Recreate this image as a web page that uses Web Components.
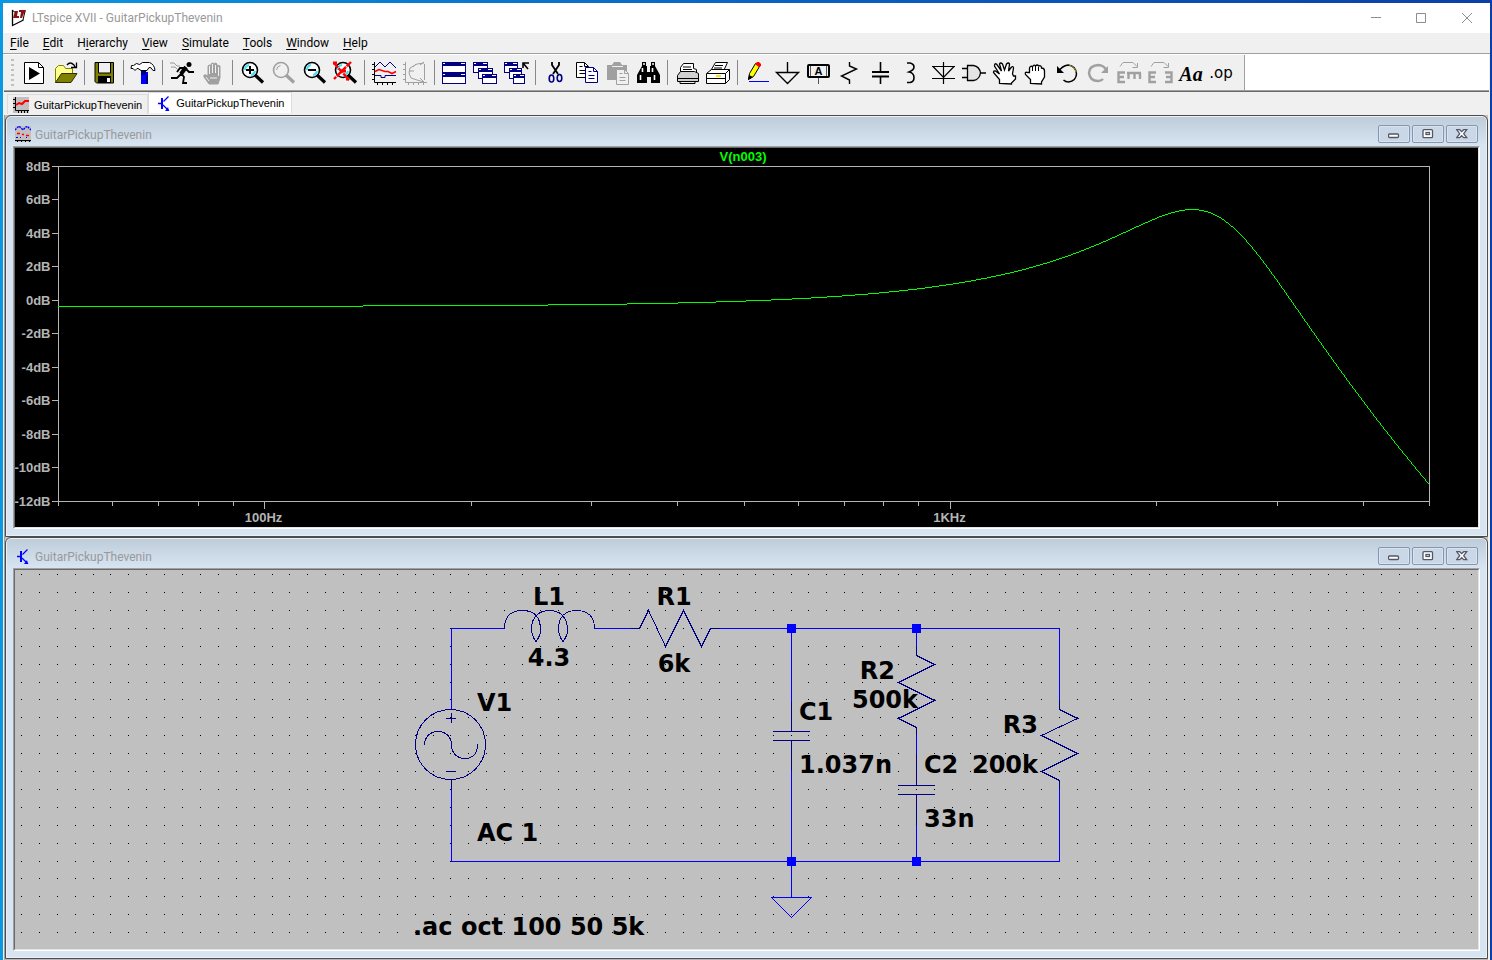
<!DOCTYPE html>
<html lang="en">
<head>
<meta charset="utf-8">
<title>LTspice XVII - GuitarPickupThevenin</title>
<style>
  html, body { height: 100%; }
  body {
    margin: 0; box-sizing: border-box; padding: 3px 2px 0 3px; overflow: hidden;
    background: linear-gradient(to right, #0a98e3, #0a63c4 50%, #0a3fa8);
    font: 12px/16px Roboto, "Noto Sans", sans-serif; color: #000;
  }
</style>
</head>
<body>
<app-window>
  <title-bar slot="bars">LTspice XVII - GuitarPickupThevenin</title-bar>
  <menu-bar slot="bars"></menu-bar>
  <tool-bar slot="bars"></tool-bar>
  <tab-strip slot="bars"></tab-strip>
  <mdi-window icon="plot" heading="GuitarPickupThevenin"><bode-plot></bode-plot></mdi-window>
  <mdi-window icon="sch" heading="GuitarPickupThevenin"><schematic-sheet></schematic-sheet></mdi-window>
</app-window>

<script>
const BUTTON_RESET = `button{all:unset;box-sizing:border-box;cursor:default} svg{display:block}`;

const axes = c => `<path d="M5.5 1V21.5H27M3 3.5h3M3 8.5h3M3 13.5h3M3 18.5h3M8.5 21v3M13.5 21v3M18.5 21v3M23.5 21v3" stroke="${c}" fill="none"/>`;
const lens = (x, c, glass) => `<circle cx="${x}" cy="9" r="7.5" fill="${glass}" stroke="${c}" stroke-width="1.6"/><path d="M${x + 5} 14l8 7.5" stroke="${c}" stroke-width="3.2"/>`;
const glint = x => `<path d="M${x - 5} 9a5 5 0 0 1 4-5M${x + 5} 10a5 5 0 0 1-4 4" stroke="#40e0f0" stroke-width="2" fill="none"/>`;
const win = (x, y, w, h) => `<rect x="${x + .5}" y="${y + .5}" width="${w - 1}" height="${h - 1}" fill="#fff" stroke="#000080"/><path d="M${x} ${y + 2}h${w}" stroke="#000080" stroke-width="4"/><path d="M${x + w - 5} ${y + 1.5}h4M${x + 1} ${y + 1.5}h2" stroke="#fff"/>`;
const sheet = (x, y, f, c) => `<path d="M${x} ${y}h8l4 4v11h-12z" fill="${f}" stroke="${c}"/><path d="M${x + 8} ${y}v4h4M${x + 3} ${y + 4}h3M${x + 3} ${y + 8}h6M${x + 3} ${y + 11}h6" fill="none" stroke="${c}"/>`;
const bend = `<path d="M6 5.5l3-4h10l4 4M18.5 6.5h5V2" fill="none" stroke="#a0a0a0"/>`;

const ICONS = {
  run: `<path d="M5.5 1.5h14l5 5v16h-19z" fill="#fff" stroke="#000"/><path d="M19.5 1.5v5h5" fill="none" stroke="#000"/><path d="M10 6v13l11-6.5z"/>`,
  open: `<path d="M5.5 21.5V7.5l3-3h5l2 3h7v5" fill="#ffff90" stroke="#808000"/><path d="M5.5 21.5l6-9h15.5l-6 9z" fill="#808000" stroke="#303000"/><path d="M17 4q3-4 7 0l1 2M21 6.5h5.5V1.5" fill="none" stroke="#000" stroke-width="1.3"/>`,
  save: `<path d="M6 1.5h18.5v20.5h-17l-1.5-1.5z" fill="#808000" stroke="#000"/><path d="M9.5 2v10h12V2" fill="#f0f0f0" stroke="#000"/><path d="M9 15h13v7H9z"/><path d="M18 17h3v4h-3z" fill="#fff"/>`,
  hammer: `<path d="M13 11h7v12h-7z" fill="#00f"/><path d="M13 9h5v5h-5z" fill="#000080"/><path d="M18 14h2v9h-2z" fill="#000080"/><path d="M3.5 4.5h2l3-2 3 1 3-2h7q5 2 5.5 8h-2q-2-4-4-3l-2 3h-6l-3-2h-1l-2 2-2-2h-2z" fill="#fff" stroke="#000"/>`,
  runner: `<circle cx="22" cy="3.5" r="2.5"/><path d="M19 7l-5 5 3 4-1 6h4M14 13l-4 4H4M19 8l3 3h5M18 7l-5 0-3 4" fill="none" stroke="#000" stroke-width="1.8"/><path d="M19 6l-5 7" stroke="#000" stroke-width="4"/><path d="M3 2h4l3 3h3M4 6h4l2 2" fill="none" stroke="#999"/>`,
  stop: `<path d="M10 15V5q1.5-2 3 0V3q1.5-2 3 0V3q2-2 3 0v2q2-1 3 0v12l-2 6H11l-5-7q-1-3 2-2z" fill="#a0a0a0" stroke="#a0a0a0"/><path d="M11.5 5v8M14.5 3v9M17.5 4v8M20.5 6v9M8 16l3 4M12 17h7" stroke="#f0f0f0" fill="none"/>`,
  zin: lens(13, '#000', '#fff') + glint(13) + `<path d="M9 9h8M13 5v8" stroke="#000" stroke-width="2"/>`,
  zpan: lens(13, '#a0a0a0', '#f0f0f0') + `<path d="M8.5 9a5 5 0 0 1 4-4.5" stroke="#a0a0a0" fill="none"/>`,
  zout: lens(13, '#000', '#fff') + glint(13) + `<path d="M9 9h8" stroke="#000" stroke-width="2"/>`,
  zfit: lens(13, '#000', '#fff') + glint(13) + `<path d="M4 2l15 17M21 1L4 18" stroke="#f00" stroke-width="2.4" stroke-dasharray="6 1"/><path d="M3 2h4M16 18h3M10 10h6" stroke="#f00" stroke-width="3"/>`,
  traces: axes('#000') + `<path d="M6 6l5-5 5 5 5-5 6 6M6 14.5h6v2h4v-2h11" stroke="#000080" fill="none"/><path d="M6 10.5l4-2 6 2h3l4 2 4-2" stroke="#f00" stroke-width="1.6" fill="none"/>`,
  smith: axes('#a0a0a0') + `<path d="M24 2l-7 1-7 4-1 5 2 5 6 2 7 2M9 10h5M13 6l3-3M24.5 3v16M20 4l4-3M20 17l4 4" fill="none" stroke="#a0a0a0"/>`,
  tile: win(3, 1, 24, 11) + win(3, 12, 24, 11),
  cascade: win(3, 1, 15, 11) + win(8, 7, 15, 11) + win(12, 13, 15, 10),
  closeall: win(3, 1, 14, 11) + win(8, 7, 13, 11) + win(12, 13, 12, 10) + `<path d="M22 7V2h6M22 2l5 6" stroke="#000" stroke-width="1.6" fill="none"/>`,
  cut: `<path d="M12 1v3l6 9M19 1v3l-6 9" stroke="#000" stroke-width="1.8" fill="none"/><ellipse cx="11.5" cy="17.5" rx="2.3" ry="3.5" fill="none" stroke="#000080" stroke-width="1.6"/><ellipse cx="19.5" cy="17" rx="2.3" ry="3.5" fill="none" stroke="#000080" stroke-width="1.6"/>`,
  copy: sheet(5.5, 1.5, '#fff', '#000') + sheet(14.5, 6.5, '#fff', '#000080'),
  paste: `<path d="M5 4h5l2-3h6l2 3h5v15H5z" fill="#a0a0a0"/><path d="M10 5.5h11" stroke="#f0f0f0"/>` + sheet(14.5, 8.5, '#f0f0f0', '#a0a0a0'),
  find: `<path d="M9 1h4v4h1v6h3V5h1V1h4v4l5 9v8h-9v-6h-4v6H4v-8l5-9z"/><path d="M10 3h2M19 3h2M9.5 7v4M19.5 7v4M7.5 14v5M21.5 14v5" stroke="#fff" stroke-width="1.6"/>`,
  print: `<path d="M8.5 12V6.500l3-4h10v5l3 1v4" fill="#fff" stroke="#000"/><path d="M5.5 14.5l3-4h14l4 2v8h-21z" fill="#d0d0d0" stroke="#000"/><path d="M8 20v2.5h15V20M6 17.5h20M11 6h8M11 8.5h9" fill="none" stroke="#000"/>`,
  psetup: `<path d="M7.5 10l5-8.5h12l-4 8.5z" fill="#fff" stroke="#000"/><path d="M3.5 12.5l5-4h18v10l-4 4h-19z" fill="#fff" stroke="#000"/><path d="M4 12.5h18.5v10M22.5 12.5l4-4M4 17.5h18M12 4.5h8M11 7h8" fill="none" stroke="#000"/><path d="M13 15h5" stroke="#ffe000" stroke-width="2"/>`,
  pencil: `<path d="M6.5 18.5l1-6 6-10 4 3-6 10z" fill="#ff0" stroke="#000"/><path d="M13 3l2-2h2l2 2v2l-2 1z" fill="#f00"/><path d="M6 19l1-5 4 2z"/><path d="M7 20.5h20" stroke="#00f"/>`,
  ground: `<path d="M14.5 1v10M3.5 11.5h22l-11 11z" fill="none" stroke="#000" stroke-width="1.4"/>`,
  label: `<rect x="4" y="4" width="21" height="12" rx="1" fill="#f0f0f0" stroke="#000" stroke-width="2"/><path d="M14.5 17v6M6.5 5v10M22.5 5v10" stroke="#555"/><text x="14.5" y="14" text-anchor="middle" font-family="Liberation Sans" font-weight="700" font-size="11">A</text>`,
  res: `<path d="M14.5 1v4l7 3-15 7 8 4v4" fill="none" stroke="#000" stroke-width="1.4"/>`,
  cap: `<path d="M14.5 1v9M14.5 16v7" stroke="#000" stroke-width="1.6"/><path d="M6 11h17M6 15.5h17" stroke="#000" stroke-width="2"/>`,
  ind: `<path d="M10 2h3q4 1 4 4t-5 5q5 1 5 5.500t-4 5h-3" fill="none" stroke="#000" stroke-width="1.6"/>`,
  diode: `<path d="M15.5 1v22M4 5.5h23M5 5.5l10.500 11 10.500-11M4 17.5h23" fill="none" stroke="#000" stroke-width="1.2"/>`,
  gate: `<path d="M8.5 4.5h6q6 1 7 7.5-1 6.500-7 7.500h-6z" fill="#e4e4e4" stroke="#000" stroke-width="1.3"/><path d="M3 7.5h5M3 16.5h5M21 12h6" stroke="#000" stroke-width="1.4"/>`,
  move: `<path d="M9.5 22.5v-4l-6-7q0-2 2-1.500l4 3-5-8q0-3 2-2l5 7-2-7q1-2 3 0l2 6 2-6q2-2 3 0l-1 7 3-4q2-1 2 1l-1 6 1 2h2v3l-4 4v1z" fill="#fff" stroke="#000" stroke-width="1.3"/>`,
  drag: `<path d="M9.5 22.5v-4l-5-5q-1-3 2-2h2V7q1-3 3-1 1-3 3-1 2-2 3 0 3-1 3 2 3 0 3 3v6l-3 5v2z" fill="#fff" stroke="#000" stroke-width="1.3"/><path d="M11.5 6v4M14.5 5v5M17.5 6v4" stroke="#000"/>`,
  undo: `<path d="M7 10q3-5 9-6 8 1 8.500 9-.5 7-8 8-3 0-5-2" fill="none" stroke="#000" stroke-width="1.5"/><path d="M5 5v7h7z"/><path d="M17 4q6 2 7 7" fill="none" stroke="#a09020"/>`,
  redo: `<path d="M24 10q-3-6-9-6-9 1-9 8 1 8 9 8 3 0 5-2" fill="none" stroke="#a0a0a0" stroke-width="2.4"/><path d="M25 5v7h-7z" fill="#a0a0a0"/>`,
  rotate: bend + `<path d="M11 11.5H4.500v9.500H11M4 16h6M13 12h14M14.500 12v6M20.500 12v6M26 12v6" fill="none" stroke="#a0a0a0" stroke-width="2.4"/>`,
  mirror: bend + `<path d="M11 11.5H4.500v9.500H11M4 16h6M20 11.5h6.500v9.500H20M21 16h6" fill="none" stroke="#a0a0a0" stroke-width="2.4"/>`,
  text: `<text x="15" y="20" text-anchor="middle" font-family="Liberation Serif" font-weight="700" font-style="italic" font-size="20">Aa</text>`,
  op: `<text x="14" y="17" text-anchor="middle" font-family="DejaVu Sans" font-size="15">.op</text>`
};

const SMALL = {
  tabplot: `<path d="M0 0h16v16H0z" fill="#c0c0c0"/><path d="M2.5 0v13.5H16M0 2.5h3M0 6.5h3M0 10.5h3M5.5 13v3M8.5 13v3M11.5 13v3M14.5 13v3" stroke="#000" fill="none"/><path d="M3 8l3-2 3 1 3-3h4" stroke="#f00" stroke-width="2" fill="none"/>`,
  plot: `<path d="M0 0h16v16H0z" fill="#c0c0c0"/><path d="M0 4l4-4 4 4 4-4 4 4" stroke="#00f" stroke-width="1.4" stroke-dasharray="2 1" fill="none"/><path d="M2 7.5h3M7 8.5h2M11 9.5h3" stroke="#f00" stroke-width="1.5"/><path d="M1 11.5h2M5 11.5h1M11 11.5h1" stroke="#00f"/><path d="M0 14.5h16M2.5 14v2M6.5 14v2M10.5 14v2M14.5 14v2" stroke="#000"/>`,
  sch: `<path d="M2 8.5h4M12.5 1.5l-5 5M7 10l6 6" stroke="#00f" stroke-width="1.3" fill="none"/><path d="M6 3v11" stroke="#00f" stroke-width="2"/><path d="M13 16H9l3-4z" fill="#00f"/>`
};

const define = (name, html, setup) => customElements.define(name, class extends HTMLElement {
  connectedCallback() {
    if (this.shadowRoot) return;
    const t = document.createElement('template');
    t.innerHTML = typeof html === 'function' ? html(this) : html;
    this.attachShadow({ mode: 'open' }).append(t.content.cloneNode(true));
    if (setup) setup(this, this.shadowRoot);
  }
});

define('app-window', `
<style>
  :host{display:flex;flex-direction:column;height:100%;background:#f0f0f0}
  .mdi{flex:1;min-height:0;display:flex;flex-direction:column;background:#c8c0b4;margin:0 2px 0 1px;border-left:1px solid #a0a0a0;border-bottom:1px solid #b8b8b8}
</style>
<slot name="bars"></slot><div class="mdi"><slot></slot></div>`);

define('title-bar', `
<style>${BUTTON_RESET}
  :host{display:flex;align-items:center;height:30px;background:#fff;color:#999}
  .logo{margin:0 6px 0 8px}
  .name{flex:1;white-space:nowrap}
  button{width:46px;height:30px;display:grid;place-items:center}
  button svg{stroke:#8c8c8c;fill:none}
</style>
<svg class="logo" width="15" height="18"><path d="M1.5 1v15.500L12.5 11" fill="none" stroke="#000" stroke-width="1.3"/><path d="M1 1l4 3M12 11l2-9" stroke="#000" fill="none"/><path d="M4 2h3L6 7h2v2H2zM8 1h7l-1 3h-1l-2 5H9l1-6H8z" fill="#8b1010"/></svg>
<span class="name"><slot></slot></span>
<button aria-label="Minimize"><svg width="11" height="11"><path d="M1 4.5h10"/></svg></button>
<button aria-label="Maximize"><svg width="11" height="11"><path d="M.5.5h9v9h-9z"/></svg></button>
<button aria-label="Close"><svg width="11" height="11"><path d="M0 0l10 10M10 0L0 10"/></svg></button>`);

define('menu-bar', `
<style>${BUTTON_RESET}
  :host{display:block;border-bottom:1px solid #a0a0a0}
  nav{display:flex;height:20px}
  button{padding:2px 7px}
  u{text-underline-offset:2px}
</style>
<nav>${['<u>F</u>ile', '<u>E</u>dit', 'H<u>i</u>erarchy', '<u>V</u>iew', '<u>S</u>imulate', '<u>T</u>ools', '<u>W</u>indow', '<u>H</u>elp'].map(m => `<button>${m}</button>`).join('')}</nav>`);

define('tool-button', el => `
<style>${BUTTON_RESET}:host{display:block} button{display:block;width:31px;height:24px}</style>
<button aria-label="${el.getAttribute('icon')}"><svg width="31" height="24">${ICONS[el.getAttribute('icon')]}</svg></button>`);

define('tool-bar', `
<style>
  :host{display:flex;background:#fff;border-bottom:1px solid #a0a0a0;margin:0 1px 1px;box-shadow:0 1px #696969}
  .band{display:flex;align-items:center;height:35px;margin-top:1px;background:#f0f0f0;border-right:1px solid #a0a0a0;padding-right:6px}
  .grip{width:3px;height:27px;margin:0 5px 0 7px;background:repeating-linear-gradient(#c0c0c0 0 2px,transparent 2px 5px)}
  hr{width:1px;height:25px;border:0;margin:0 4px 0 3px;background:#888}
</style>
<div class="band"><span class="grip"></span>${'run open | save | hammer | runner stop | zin zpan zout zfit | traces smith | tile cascade closeall | cut copy paste find | print psetup | pencil ground label res cap ind diode gate move drag undo redo rotate mirror text op'
  .split(' ').map(n => n === '|' ? '<hr>' : `<tool-button icon="${n}"></tool-button>`).join('')}</div>`);

define('tab-strip', `
<style>${BUTTON_RESET}
  :host{display:flex;align-items:flex-end;height:23px;box-sizing:border-box;padding:1px 3px;margin-left:1px;font:11px/16px "Liberation Sans",sans-serif}
  button{display:flex;align-items:center;height:20px;border:1px solid #dcdcdc;border-bottom:0;padding:0 5px;gap:5px}
  button[aria-selected=true]{height:21px;background:#fff;margin-bottom:1px;padding:0 7px;gap:6px}
</style>
<button role="tab" aria-selected="false"><svg width="16" height="16">${SMALL.tabplot}</svg>GuitarPickupThevenin</button>
<button role="tab" aria-selected="true"><svg width="14" height="16">${SMALL.sch}</svg>GuitarPickupThevenin</button>`);

define('mdi-window', el => `
<style>${BUTTON_RESET}
  :host{flex:1 1 0;min-height:0;box-sizing:border-box;display:flex;flex-direction:column;border:1px solid #4c4c4c;border-radius:6px 6px 0 0;
    padding:0 7px 7px;background:linear-gradient(#becbd8,#d7e4f2 30px);box-shadow:inset 0 0 0 1px #e9f0f7}
  header{display:flex;align-items:center;height:24px;color:#999;padding:6px 2px 0}
  h2{font:inherit;margin:2px 0 0 4px;flex:1}
  .controls{display:flex;gap:2px}
  .controls button{width:32px;height:18px;border:1px solid #8795b0;border-radius:2px;background:#c9d7e7;box-shadow:inset 0 0 0 1px #d8e3f0;display:grid;place-items:center}
  .controls svg{fill:#fff;stroke:#535666;stroke-width:1.3}
  .edge{flex:1;min-height:0;display:flex;border:1px solid;border-color:#a0a0a0 #fff #fff #a0a0a0}
  .client{flex:1;min-width:0;display:flex;border:1px solid;border-color:#696969 #e3e3e3 #e3e3e3 #696969}
</style>
<header><svg width="16" height="16">${SMALL[el.getAttribute('icon')]}</svg><h2>${el.getAttribute('heading')}</h2>
<div class="controls">
<button aria-label="Minimize"><svg width="12" height="10"><rect x=".5" y="5" width="10" height="3.5" rx="1"/></svg></button>
<button aria-label="Restore"><svg width="12" height="10"><rect x="1" y=".7" width="9.500" height="8" rx="1"/><rect x="4" y="3.5" width="3.500" height="2"/></svg></button>
<button aria-label="Close"><svg width="12" height="10"><path d="M.7.7h3l2 2 2-2h3l-3 4 3 4h-3l-2-2-2 2h-3l3-4z"/></svg></button>
</div></header>
<div class="edge"><div class="client"><slot></slot></div></div>`);

/* Response of the pickup: L1 + R1 in series, loaded by C1 || (R2 + C2) || R3. */
function responseDb(f) {
  const w = 2 * Math.PI * f, r2 = 500e3, x2 = -1 / (w * 33e-9), m = r2 * r2 + x2 * x2;
  const g = 1 / 200e3 + r2 / m, b = w * 1.037e-9 - x2 / m, rs = 6e3, xs = w * 4.3;
  return -20 * Math.log10(Math.hypot(1 + rs * g - xs * b, rs * b + xs * g));
}

define('bode-plot', `
<style>
  :host{flex:1;min-width:0;display:block;background:#000;overflow:hidden}
  svg{display:block;width:100%;height:100%}
  text{font:700 13px "Liberation Sans",sans-serif;fill:#b4b4b4}
  .trace{fill:#0f0}
  path{fill:none;stroke:#b4b4b4;shape-rendering:crispEdges}
  .curve{stroke:#0f0}
</style><svg></svg>`, (host, root) => {
  const svg = root.querySelector('svg');
  const draw = () => {
    const L = 43.5, T = 18.5, R = host.clientWidth - 48.5, B = host.clientHeight - 25.5;
    const X = f => L + (R - L) * Math.log10(f / 50) / 2, Y = d => T + (B - T) * (8 - d) / 20;
    let ticks = '', labels = '';
    for (let d = 8; d >= -12; d -= 2) {
      const y = Math.floor(Y(d) - .5) + .5;
      ticks += `M${L - 7} ${y}H${L}`;
      labels += `<text x="${L - 8}" y="${y + 4.5}" text-anchor="end">${d}dB</text>`;
    }
    for (const f of [50, 60, 70, 80, 90, 100, 200, 300, 400, 500, 600, 700, 800, 900, 1000, 2000, 3000, 4000, 5000]) {
      const x = Math.floor(X(f)) + .5, major = f === 100 || f === 1000;
      ticks += `M${x} ${B}v${major ? 7 : 4}`;
      if (major) labels += `<text x="${x - 1}" y="${B + 20.5}" text-anchor="middle">${f === 100 ? '100Hz' : '1KHz'}</text>`;
    }
    /* One vertical run per pixel column keeps the trace a single pixel wide and unbroken. */
    const row = x => Math.floor(Y(responseDb(50 * Math.pow(100, (x - L) / (R - L)))));
    let curve = '';
    for (let x = L; x < R; x++) {
      const a = row(x), b = row(x + 1);
      curve += `M${x} ${b < a ? b + 1 : a}v${Math.max(1, Math.abs(b - a))}`;
    }
    svg.innerHTML = `<path d="M${L} ${T}H${R}V${B}H${L}z${ticks}"/><path class="curve" d="${curve}"/>${labels}<text class="trace" x="${(L + R) / 2 - 1}" y="13" text-anchor="middle">V(n003)</text>`;
  };
  draw();
  new ResizeObserver(draw).observe(host);
});

define('schematic-sheet', `
<style>
  :host{flex:1;min-width:0;display:block;background:#c0c0c0;overflow:hidden}
  svg{display:block;width:100%;height:100%}
  text{font:700 24px "DejaVu Sans",sans-serif}
  path,circle{fill:none;shape-rendering:crispEdges}
  .dots{stroke:#000}.wire{stroke:#00f}.part{stroke:#000080}.node{fill:#00f}
  .mid{text-anchor:middle}.end{text-anchor:end}
</style>
<svg><path class="dots"/>
<g transform="translate(-15 -570)">
  <path class="wire" d="M451.5 709V628.5H504M594 628.5H631M720 628.5H1059.5V700M1059.5 789V861.5H451.5V789M791.5 628V702M791.5 771V897.5M916.5 628V647M916.5 735V754M916.5 825V861M771.5 897.5H811.5L791.5 917.5z"/>
  <path class="part" d="M504.5 628.5C504.5 616 512 610.5 522.5 610.5S540.5 616 540.5 630C540.5 634 538 639 536 641.5C534 639 531.5 634 531.5 629C531.5 616 540 610.5 549.5 610.5S567.5 616 567.5 630C567.5 634 565 639 563 641.5C561 639 558.5 634 558.5 629C558.5 616 566 610.5 576.5 610.5S594.5 616 594.5 628.5"/>
  <path class="part" d="M631 628.5H639.5L648.5 610.5L665.5 646.5L683.5 610.5L701.5 646.5L710.5 628.5H720"/>
  <circle class="part" cx="450.5" cy="744.5" r="35"/>
  <path class="part" d="M451.5 713V723M446 718.5H456M446 771.5H456M424.5 745C424.5 737 430 731.5 438 731.5S451.5 737 451.5 745S457 758.5 465 758.5S477.5 753 477.5 744M451.5 780V789"/>
  <path class="part" d="M791.5 702V731M773 731.5H810M773 740.5H810M791.5 741V771"/>
  <path class="part" d="M916.5 647V655.5L934.5 664.5L898.5 682.5L934.5 700.5L898.5 718.5L916.5 727.5V735M916.5 754V785M898 785.5H935M898 794.5H935M916.5 795V825"/>
  <path class="part" d="M1059.5 700V709.5L1077.5 718.5L1041.5 735.5L1077.5 753.5L1041.5 771.5L1059.5 780.5V789"/>
  <path class="node" d="M787 624h9v9h-9zM912 624h9v9h-9zM787 857h9v9h-9zM912 857h9v9h-9z"/>
  <text class="mid" x="549" y="605">L1</text><text class="mid" x="549" y="666">4.3</text>
  <text class="mid" x="674" y="605">R1</text><text class="mid" x="674" y="672">6k</text>
  <text x="477" y="711">V1</text><text x="477" y="841">AC 1</text>
  <text x="799" y="720">C1</text><text x="799" y="773">1.037n</text>
  <text class="end" x="895" y="679">R2</text><text class="end" x="918" y="708">500k</text>
  <text class="end" x="1038" y="733">R3</text><text class="end" x="1038" y="773">200k</text>
  <text x="924" y="773">C2</text><text x="924" y="827">33n</text>
  <text x="413" y="935">.ac oct 100 50 5k</text>
</g></svg>`, (host, root) => {
  const pitch = 17.9;
  const draw = () => {
    let d = '';
    for (let y = 4.6; y < host.clientHeight; y += pitch)
      for (let x = 6.4; x < host.clientWidth; x += pitch) d += `M${Math.floor(x)} ${Math.floor(y) + .5}h1`;
    root.querySelector('.dots').setAttribute('d', d);
  };
  draw();
  new ResizeObserver(draw).observe(host);
});
</script>
</body>
</html>
